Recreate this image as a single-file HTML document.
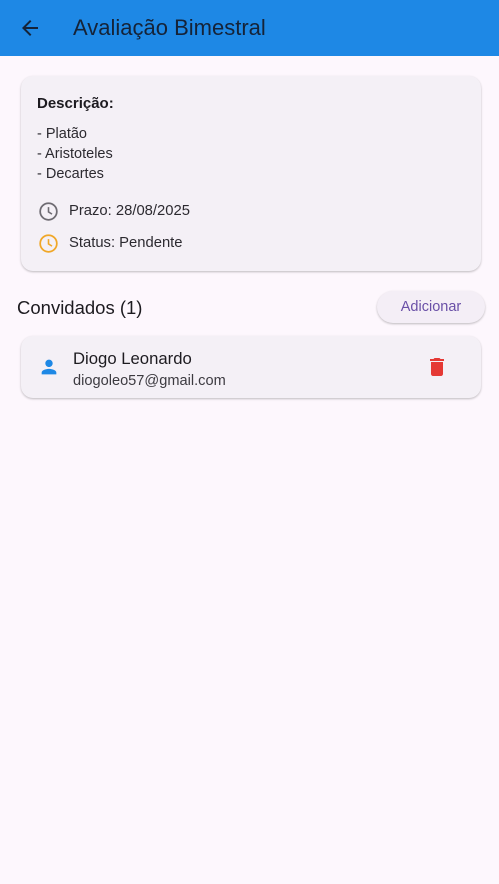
<!DOCTYPE html>
<html><head><style>
body{margin:0;width:499px;height:884px;background:#fdf7fd;font-family:"Liberation Sans",sans-serif;position:relative;overflow:hidden;color:#1d1b20}
.bar{position:absolute;left:0;top:0;width:499px;height:56px;background:#1e88e5}
.title{position:absolute;left:73px;top:15px;font-size:22px;color:#152338}
.card{position:absolute;background:#f4f0f6;border-radius:12px;box-shadow:0 1px 2px rgba(0,0,0,.25)}
.t{position:absolute;white-space:nowrap}
</style></head><body>
<div class="bar"></div>
<svg style="position:absolute;left:18px;top:16px" width="24" height="24" viewBox="0 0 24 24"><path d="M20 11H7.83l5.59-5.59L12 4l-8 8 8 8 1.41-1.41L7.83 13H20z" fill="#152338"/></svg>
<div class="title">Avaliação Bimestral</div>
<div class="card" style="left:21px;top:76px;width:460px;height:195px"></div>
<div class="t" style="left:37px;top:95px;font-size:15px;font-weight:bold;color:#1d1b20">Descrição:</div>
<div class="t" style="left:37px;top:124px;font-size:14.5px;line-height:20px;color:#2c2a30">- Platão<br>- Aristoteles<br>- Decartes</div>
<svg style="position:absolute;left:38px;top:201px" width="21" height="21" viewBox="0 0 24 24"><circle cx="12" cy="12" r="9.5" fill="none" stroke="#6e6b72" stroke-width="2"/><path d="M12 7v5.5l4 2.5" fill="none" stroke="#6e6b72" stroke-width="1.8"/></svg>
<div class="t" style="left:69px;top:203px;font-size:14.8px;color:#2c2a30">Prazo: 28/08/2025</div>
<svg style="position:absolute;left:38px;top:233px" width="21" height="21" viewBox="0 0 24 24"><circle cx="12" cy="12" r="9.5" fill="none" stroke="#f0a728" stroke-width="2"/><path d="M12 7v5.5l4 2.5" fill="none" stroke="#f0a728" stroke-width="1.8"/></svg>
<div class="t" style="left:69px;top:235px;font-size:14.8px;color:#2c2a30">Status: Pendente</div>
<div class="t" style="left:17px;top:297px;font-size:18.5px;color:#1d1b20">Convidados (1)</div>
<div style="position:absolute;left:377px;top:291px;width:108px;height:32px;border-radius:16px;background:#f4eef6;box-shadow:0 1px 2px rgba(0,0,0,.25);color:#6a50a7;font-size:14.5px;text-align:center;line-height:32px">Adicionar</div>
<div class="card" style="left:21px;top:336px;width:460px;height:62px"></div>
<svg style="position:absolute;left:38px;top:356px" width="22" height="22" viewBox="0 0 24 24"><path d="M12 12c2.2 0 4-1.8 4-4s-1.8-4-4-4-4 1.8-4 4 1.8 4 4 4zm0 2c-2.7 0-8 1.3-8 4v2h16v-2c0-2.7-5.3-4-8-4z" fill="#1e88e5"/></svg>
<div class="t" style="left:73px;top:349px;font-size:16.7px;color:#1d1b20">Diogo Leonardo</div>
<div class="t" style="left:73px;top:373px;font-size:14.6px;color:#3c3a40">diogoleo57@gmail.com</div>
<svg style="position:absolute;left:425px;top:355px" width="24" height="24" viewBox="0 0 24 24"><path d="M6 19c0 1.1.9 2 2 2h8c1.1 0 2-.9 2-2V7H6v12zM19 4h-3.5l-1-1h-5l-1 1H5v2h14V4z" fill="#e53935"/></svg>
</body></html>
